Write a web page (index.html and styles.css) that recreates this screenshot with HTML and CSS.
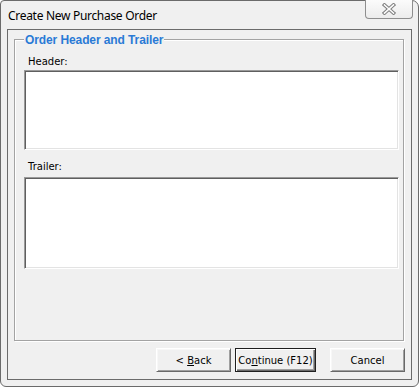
FILE: index.html
```html
<!DOCTYPE html>
<html>
<head>
<meta charset="utf-8">
<link rel="stylesheet" href="styles.css">
</head>
<body>
<div class="window">
  <div class="titlebar"><span class="title">Create New Purchase Order</span></div>
  <div class="close">
    <svg width="14" height="12" viewBox="0 0 14 12"><path d="M2.5 2 L11.5 10 M11.5 2 L2.5 10" stroke="#7d7d7d" stroke-width="3.6" stroke-linecap="square" fill="none"/><path d="M2.5 2 L11.5 10 M11.5 2 L2.5 10" stroke="#fdfdfd" stroke-width="1.6" stroke-linecap="square" fill="none"/></svg>
  </div>
  <div class="client">
    <div class="group">
      <span class="legend">Order Header and Trailer</span>
      <div class="label label-header">Header:</div>
      <textarea class="field field-header"></textarea>
      <div class="label label-trailer">Trailer:</div>
      <textarea class="field field-trailer"></textarea>
    </div>
    <div class="buttons">
      <button class="btn btn-back">&lt; <u>B</u>ack</button>
      <button class="btn btn-default">Co<u>n</u>tinue (F12)</button>
      <button class="btn btn-cancel">Cancel</button>
    </div>
  </div>
</div>
</body>
</html>
```
FILE: styles.css
```css
* { box-sizing: border-box; }
html, body { margin: 0; padding: 0; background: #ffffff; }
body { width: 419px; height: 387px; overflow: hidden; }

.window {
  position: relative;
  width: 419px;
  height: 387px;
  border: 1px solid #6b6b6b;
  border-radius: 4px 7px 6px 6px;
  background: #f0f0f0;
  display: flex;
  flex-direction: column;
}

.titlebar {
  flex: none;
  height: 28px;
  padding-left: 7px;
  display: flex;
  align-items: center;
}
.title {
  font-family: "Noto Sans", "DejaVu Sans", sans-serif;
  font-size: 12px;
  color: #000;
  letter-spacing: -0.3px;
}

.close {
  position: absolute;
  top: -1px;
  right: 5px;
  width: 48px;
  height: 19px;
  border: 1px solid #8e8e8e;
  border-top: none;
  border-radius: 0 0 4px 4px;
  background: linear-gradient(#fbfbfb, #ececec);
  display: flex;
  align-items: center;
  justify-content: center;
}

.client {
  flex: 1;
  margin: 0 6px 6px 6px;
  border: 1px solid #6b6b6b;
  background: #f0f0f0;
  padding: 9px 6px 7px 6px;
  display: flex;
  flex-direction: column;
  font-family: "DejaVu Sans", sans-serif;
  font-size: 10px;
}

.group {
  position: relative;
  height: 302px;
  margin-right: 1px;
  border: 1px solid #a3a3a3;
  box-shadow: inset 1px 1px 0 #ffffff, 1px 1px 0 #ffffff;
  padding: 15px 4px 0 9px;
  display: flex;
  flex-direction: column;
}

.legend {
  position: absolute;
  top: -7px;
  left: 9px;
  padding: 0 1px;
  background: #f0f0f0;
  color: #2a7ad6;
  font-family: "Liberation Sans", sans-serif;
  font-weight: bold;
  font-size: 12px;
  line-height: 14px;
  letter-spacing: -0.1px;
}

.label {
  margin-left: 4px;
  line-height: 13px;
  color: #000;
}
.label-header { margin-bottom: 2px; }
.label-trailer { margin-top: 10px; margin-bottom: 4px; }

.field {
  display: block;
  width: 375px;
  margin: 0;
  padding: 0;
  resize: none;
  outline: none;
  background: #ffffff;
  border-style: solid;
  border-width: 1px;
  border-color: #9a9a9a #ffffff #ffffff #9a9a9a;
  box-shadow: inset 1px 1px 0 #5f5f5f, inset -1px -1px 0 #e3e3e3;
}
.field-header { height: 80px; }
.field-trailer { height: 92px; }

.buttons {
  margin-top: 7px;
  height: 24px;
  display: flex;
  justify-content: flex-end;
}

.btn {
  height: 24px;
  margin: 0;
  padding: 0;
  font-family: "DejaVu Sans", sans-serif;
  font-size: 10px;
  color: #000;
  background: #f0f0f0;
  border: 1px solid;
  border-color: #ffffff #696969 #696969 #ffffff;
  box-shadow: inset 1px 1px 0 #f7f7f7, inset -1px -1px 0 #a0a0a0;
  border-radius: 0;
}
.btn-back { width: 75px; margin-right: 4px; }
.btn-default {
  width: 81px;
  margin-right: 14px;
  border-color: #1f1f1f;
  box-shadow: inset 1px 1px 0 #ffffff, inset -1px -1px 0 #696969, inset -2px -2px 0 #a0a0a0;
}
.btn-cancel { width: 75px; }
```
